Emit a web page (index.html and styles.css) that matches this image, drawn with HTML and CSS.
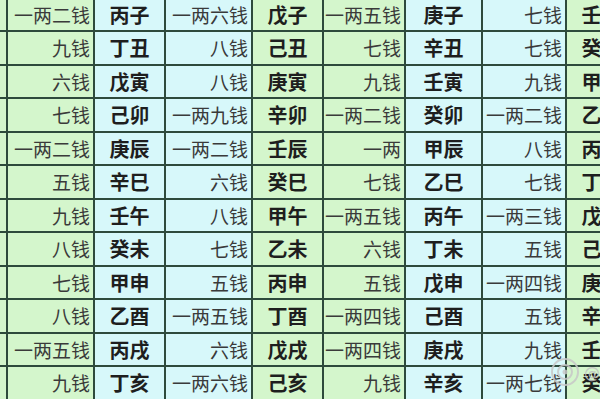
FILE: index.html
```html
<!DOCTYPE html>
<html lang="zh">
<head>
<meta charset="utf-8">
<link rel="stylesheet" href="styles.css">
</head>
<body>
<div class="sheet">
  <div class="c g"></div><div class="c g w">一两二钱</div><div class="c b z">丙子</div><div class="c b w">一两六钱</div><div class="c g z">戊子</div><div class="c g w">一两五钱</div><div class="c b z">庚子</div><div class="c b w">七钱</div><div class="c g z">壬子</div>
  <div class="c g"></div><div class="c g w">九钱</div><div class="c b z">丁丑</div><div class="c b w">八钱</div><div class="c g z">己丑</div><div class="c g w">七钱</div><div class="c b z">辛丑</div><div class="c b w">七钱</div><div class="c g z">癸丑</div>
  <div class="c g"></div><div class="c g w">六钱</div><div class="c b z">戊寅</div><div class="c b w">八钱</div><div class="c g z">庚寅</div><div class="c g w">九钱</div><div class="c b z">壬寅</div><div class="c b w">九钱</div><div class="c g z">甲寅</div>
  <div class="c g"></div><div class="c g w">七钱</div><div class="c b z">己卯</div><div class="c b w">一两九钱</div><div class="c g z">辛卯</div><div class="c g w">一两二钱</div><div class="c b z">癸卯</div><div class="c b w">一两二钱</div><div class="c g z">乙卯</div>
  <div class="c g"></div><div class="c g w">一两二钱</div><div class="c b z">庚辰</div><div class="c b w">一两二钱</div><div class="c g z">壬辰</div><div class="c g w">一两</div><div class="c b z">甲辰</div><div class="c b w">八钱</div><div class="c g z">丙辰</div>
  <div class="c g"></div><div class="c g w">五钱</div><div class="c b z">辛巳</div><div class="c b w">六钱</div><div class="c g z">癸巳</div><div class="c g w">七钱</div><div class="c b z">乙巳</div><div class="c b w">七钱</div><div class="c g z">丁巳</div>
  <div class="c g"></div><div class="c g w">九钱</div><div class="c b z">壬午</div><div class="c b w">八钱</div><div class="c g z">甲午</div><div class="c g w">一两五钱</div><div class="c b z">丙午</div><div class="c b w">一两三钱</div><div class="c g z">戊午</div>
  <div class="c g"></div><div class="c g w">八钱</div><div class="c b z">癸未</div><div class="c b w">七钱</div><div class="c g z">乙未</div><div class="c g w">六钱</div><div class="c b z">丁未</div><div class="c b w">五钱</div><div class="c g z">己未</div>
  <div class="c g"></div><div class="c g w">七钱</div><div class="c b z">甲申</div><div class="c b w">五钱</div><div class="c g z">丙申</div><div class="c g w">五钱</div><div class="c b z">戊申</div><div class="c b w">一两四钱</div><div class="c g z">庚申</div>
  <div class="c g"></div><div class="c g w">八钱</div><div class="c b z">乙酉</div><div class="c b w">一两五钱</div><div class="c g z">丁酉</div><div class="c g w">一两四钱</div><div class="c b z">己酉</div><div class="c b w">五钱</div><div class="c g z">辛酉</div>
  <div class="c g"></div><div class="c g w">一两五钱</div><div class="c b z">丙戌</div><div class="c b w">六钱</div><div class="c g z">戊戌</div><div class="c g w">一两四钱</div><div class="c b z">庚戌</div><div class="c b w">九钱</div><div class="c g z">壬戌</div>
  <div class="c g"></div><div class="c g w">九钱</div><div class="c b z">丁亥</div><div class="c b w">一两六钱</div><div class="c g z">己亥</div><div class="c g w">九钱</div><div class="c b z">辛亥</div><div class="c b w">一两七钱</div><div class="c g z">癸亥</div>
</div>
<div class="mark">
  <svg width="34" height="34" viewBox="0 0 34 34"><circle cx="17" cy="17" r="13" fill="none" stroke="#c8c8c8" stroke-width="2"/><circle cx="17" cy="17" r="7" fill="none" stroke="#c8c8c8" stroke-width="2"/><circle cx="17" cy="17" r="2.5" fill="#c8c8c8"/></svg>
  <span class="mark-text">@</span>
</div>
</body>
</html>
```
FILE: styles.css
```css
html, body {
  margin: 0;
  padding: 0;
  width: 600px;
  height: 400px;
  overflow: hidden;
  background: #ffffff;
}
.sheet {
  display: grid;
  grid-template-columns: 6px 85px 69px 85px 69px 80px 75px 82px 69px;
  grid-auto-rows: 31.5px;
  gap: 2px;
  background: #2e4a3c;
  width: 636px;
  margin-top: -1.5px;
  font-family: "Noto Sans CJK SC", "Noto Sans", sans-serif;
}
.c {
  display: flex;
  align-items: center;
  overflow: hidden;
  white-space: nowrap;
}
.g { background: #d4f6cc; }
.b { background: #d7f8fa; }
.w {
  justify-content: flex-end;
  padding-right: 3px;
  font-size: 19px;
  color: #3a3a3a;
  font-weight: 400;
}
.z {
  justify-content: center;
  font-size: 20px;
  font-weight: 700;
  color: #1e1e1e;
}
.mark {
  position: absolute;
  left: 548px;
  top: 355px;
  display: flex;
  align-items: center;
  gap: 2px;
  opacity: 0.85;
}
.mark-text {
  font-family: "DejaVu Sans", sans-serif;
  font-size: 16px;
  color: #c0c0c0;
}
```
